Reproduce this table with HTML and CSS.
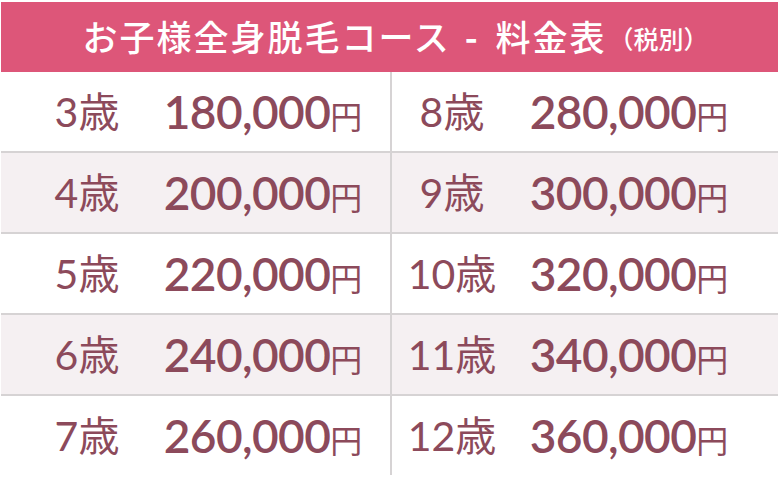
FILE: index.html
```html
<!DOCTYPE html>
<html lang="ja">
<head>
<meta charset="utf-8">
<link rel="stylesheet" href="styles.css">
</head>
<body>
<div class="wrap">
  <div class="head"><span class="title">お子様全身脱毛コース<span class="dash">-</span>料金表</span><span class="note">（税別）</span></div>
  <div class="table">
    <div class="row">
      <div class="half left"><span class="age">3歳</span><span class="price">180,000<small>円</small></span></div>
      <div class="half right"><span class="age">8歳</span><span class="price">280,000<small>円</small></span></div>
    </div>
    <div class="row alt">
      <div class="half left"><span class="age">4歳</span><span class="price">200,000<small>円</small></span></div>
      <div class="half right"><span class="age">9歳</span><span class="price">300,000<small>円</small></span></div>
    </div>
    <div class="row">
      <div class="half left"><span class="age">5歳</span><span class="price">220,000<small>円</small></span></div>
      <div class="half right"><span class="age">10歳</span><span class="price">320,000<small>円</small></span></div>
    </div>
    <div class="row alt">
      <div class="half left"><span class="age">6歳</span><span class="price">240,000<small>円</small></span></div>
      <div class="half right"><span class="age">11歳</span><span class="price">340,000<small>円</small></span></div>
    </div>
    <div class="row last">
      <div class="half left"><span class="age">7歳</span><span class="price">260,000<small>円</small></span></div>
      <div class="half right"><span class="age">12歳</span><span class="price">360,000<small>円</small></span></div>
    </div>
  </div>
</div>
</body>
</html>
```
FILE: styles.css
```css
html, body {
  margin: 0;
  padding: 0;
  background: #ffffff;
}
.wrap {
  width: 777px;
  margin: 2px 0 0 1px;
  font-family: Lato, "Noto Sans CJK JP", sans-serif;
  color: #8c4a5b;
}
.head {
  height: 70px;
  background: #dd5679;
  color: #ffffff;
  display: flex;
  align-items: center;
  justify-content: center;
  font-family: "Noto Sans CJK JP", sans-serif;
  padding-bottom: 4px;
  box-sizing: border-box;
}
.head .title {
  font-size: 35px;
  font-weight: 500;
  letter-spacing: 2px;
}
.head .dash {
  display: inline-block;
  margin: 0 16px 0 14px;
  font-weight: 700;
}
.head .note {
  font-size: 25px;
  font-weight: 500;
  margin-top: 6px;
  margin-left: 2px;
  margin-right: -12px;
}
.row {
  display: grid;
  grid-template-columns: 389px 388px;
  height: 79px;
  border-bottom: 2px solid #d6d3d4;
}
.row.alt {
  background: #f5f0f2;
}
.row.last {
  border-bottom: none;
}
.half {
  display: grid;
  align-items: center;
}
.half.left {
  grid-template-columns: 30px 112px 240px;
}
.half.left .age {
  grid-column: 2;
}
.half.right {
  border-left: 2px solid #d6d3d4;
  grid-template-columns: 4px 112px 242px;
}
.half.right .age {
  grid-column: 2;
}
.age {
  text-align: center;
  font-size: 41px;
  font-weight: 400;
  line-height: 1;
}
.price {
  text-align: center;
  font-size: 46px;
  font-weight: 600;
  line-height: 1;
  letter-spacing: -0.6px;
}
.price small {
  font-family: "Noto Sans CJK JP", sans-serif;
  font-size: 32px;
  font-weight: 400;
  letter-spacing: 0;
}
```
